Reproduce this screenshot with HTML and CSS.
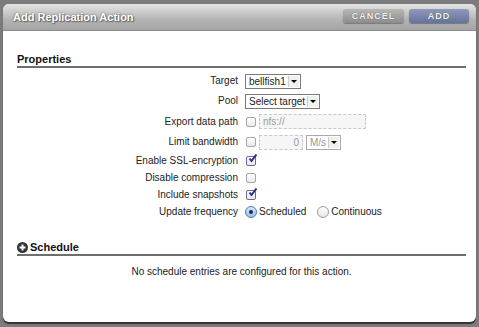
FILE: index.html
```html
<!DOCTYPE html>
<html lang="en">
<head>
    <meta charset="UTF-8">
    <title>Add Replication Action</title>
    <link rel="stylesheet" href="styles.css">
</head>
<body>

<div class="dialog">
    <!-- Title Bar -->
    <div class="dialog-title">
        <span class="title-text">Add Replication Action</span>
        <div class="title-buttons">
            <button class="btn btn-cancel">CANCEL</button>
            <button class="btn btn-add">ADD</button>
        </div>
    </div>

    <div class="dialog-body">
        <!-- Properties -->
        <h3 class="section-head">Properties</h3>
        <div class="form-grid">
            <label class="row-label tall">Target</label>
            <div class="row-ctrl tall">
                <span class="select">bellfish1<span class="arrow"></span></span>
            </div>

            <label class="row-label tall">Pool</label>
            <div class="row-ctrl tall">
                <span class="select">Select target<span class="arrow"></span></span>
            </div>

            <label class="row-label tall">Export data path</label>
            <div class="row-ctrl tall">
                <span class="check"></span>
                <span class="text-input input-path">nfs://</span>
            </div>

            <label class="row-label tall">Limit bandwidth</label>
            <div class="row-ctrl tall">
                <span class="check"></span>
                <span class="text-input input-bw">0</span>
                <span class="select disabled">M/s<span class="arrow"></span></span>
            </div>

            <label class="row-label">Enable SSL-encryption</label>
            <div class="row-ctrl">
                <span class="check checked">
                    <svg width="11" height="10" viewBox="0 0 11 10"><path d="M2.5 4.5 L4.5 7 L9.5 0.5" fill="none" stroke="#2a2a9a" stroke-width="2"/></svg>
                </span>
            </div>

            <label class="row-label">Disable compression</label>
            <div class="row-ctrl">
                <span class="check"></span>
            </div>

            <label class="row-label">Include snapshots</label>
            <div class="row-ctrl">
                <span class="check checked">
                    <svg width="11" height="10" viewBox="0 0 11 10"><path d="M2.5 4.5 L4.5 7 L9.5 0.5" fill="none" stroke="#2a2a9a" stroke-width="2"/></svg>
                </span>
            </div>

            <label class="row-label">Update frequency</label>
            <div class="row-ctrl">
                <span class="radio on"></span><span class="radio-text">Scheduled</span>
                <span class="radio"></span><span class="radio-text">Continuous</span>
            </div>
        </div>

        <!-- Schedule -->
        <h3 class="section-head schedule-head">
            <svg class="plus-icon" width="11" height="11" viewBox="0 0 11 11">
                <circle cx="5.5" cy="5.5" r="5.5" fill="#333"/>
                <path d="M5.5 2.5 V8.5 M2.5 5.5 H8.5" stroke="#fff" stroke-width="2"/>
            </svg>
            Schedule
        </h3>
        <p class="empty-note">No schedule entries are configured for this action.</p>
    </div>
</div>

</body>
</html>
```

FILE: styles.css
```css
/* General */
body {
    margin: 0;
    background-color: #7c7c7c;
    font-family: 'Liberation Sans', Arial, sans-serif;
    font-size: 10px;
    color: #1a1a1a;
    height: 327px;
    overflow: hidden;
}

/* Dialog */
.dialog {
    margin: 4px 3px 0 3px;
    height: 318px;
    background-color: #fff;
    border-radius: 6px;
    box-shadow: 0 2px 1px #333;
    overflow: hidden;
}

.dialog-title {
    height: 26px;
    display: flex;
    align-items: center;
    justify-content: space-between;
    padding: 0 7px 0 10px;
    background: linear-gradient(#e4e4e4, #b4b4b4 60%, #a4a4a4);
    border-bottom: 1px solid #8a8a8a;
}

.title-text {
    color: #fff;
    font-weight: bold;
    font-size: 11px;
    text-shadow: 0 0 2px #555, 1px 1px 1px #666;
    padding-bottom: 1px;
}

.title-buttons {
    display: flex;
    gap: 5px;
    margin-top: -3px;
}

.btn {
    width: 61px;
    height: 14px;
    padding: 0;
    border: none;
    border-radius: 3px;
    font-family: 'Liberation Sans', Arial, sans-serif;
    font-size: 9px;
    font-weight: bold;
    letter-spacing: 1px;
    color: #f4f4f4;
    text-shadow: 0 0 1px #444;
    box-shadow: 0 1px 1px #777;
}

.btn-cancel {
    background: linear-gradient(#b8b8b8, #8c8c8c);
}

.btn-add {
    width: 60px;
    background: linear-gradient(#8e9bbb, #66739a);
}

/* Body */
.dialog-body {
    padding: 22px 10px 0 14px;
}

.section-head {
    margin: 0;
    font-size: 11px;
    font-weight: bold;
    color: #111;
    padding-bottom: 1px;
    border-bottom: 2px solid #6e6e6e;
    display: flex;
    align-items: center;
    gap: 2px;
}

/* Form */
.form-grid {
    display: grid;
    grid-template-columns: 221px auto;
    column-gap: 7px;
    margin-top: 3px;
}

.row-label {
    text-align: right;
    height: 17px;
    line-height: 17px;
    color: #222;
}

.row-ctrl {
    display: flex;
    align-items: center;
    gap: 2px;
    height: 17px;
}

.row-label.tall,
.row-ctrl.tall {
    height: 20.3px;
    line-height: 20.3px;
}

.select {
    position: relative;
    display: inline-block;
    white-space: nowrap;
    height: 13px;
    line-height: 13px;
    padding: 0 14px 0 3px;
    border: 1px solid #7a7a7a;
    background: #fff;
}

.select .arrow {
    position: absolute;
    right: 1px;
    top: 1px;
    width: 10px;
    height: 11px;
    background: #f0f0f0;
    border-left: 1px solid #ccc;
}

.select .arrow::after {
    content: '';
    position: absolute;
    left: 2px;
    top: 4px;
    border-left: 3px solid transparent;
    border-right: 3px solid transparent;
    border-top: 3px solid #000;
}

.select.disabled {
    color: #999;
    border-color: #aaa;
    margin-left: 1px;
}

.text-input {
    display: inline-block;
    height: 13px;
    line-height: 13px;
    border: 1px dashed #c8c8c8;
    background: #f6f6f6;
    color: #999;
    padding: 0 3px;
    margin-left: 1px;
}

.input-path {
    width: 99px;
}

.input-bw {
    width: 36px;
    text-align: right;
}

/* Checkbox and radio */
.check {
    display: inline-block;
    position: relative;
    width: 8px;
    height: 8px;
    border: 1px solid #a8a8a8;
    border-radius: 2px;
    background: linear-gradient(#fff, #e8e8e8);
    margin-left: 1px;
}

.check.checked {
    border-color: #6a6a9a;
}

.check svg {
    position: absolute;
    left: 0;
    top: -3px;
}

.radio {
    display: inline-block;
    position: relative;
    width: 10px;
    height: 10px;
    border: 1px solid #9a9a9a;
    border-radius: 50%;
    background: linear-gradient(#fff, #e6e6e6);
}

.radio.on {
    border-color: #4a7ab8;
    background: linear-gradient(#d8e8f8, #9cc0e8);
}

.radio.on::after {
    content: '';
    position: absolute;
    left: 3px;
    top: 3px;
    width: 4px;
    height: 4px;
    border-radius: 50%;
    background: #1a2a4a;
}

.radio-text {
    margin-right: 9px;
}

/* Schedule */
.schedule-head {
    margin-top: 21px;
}

.plus-icon {
    margin-top: 1px;
}

.empty-note {
    text-align: center;
    margin: 10px 0 0 0;
    color: #1a1a1a;
}
```
